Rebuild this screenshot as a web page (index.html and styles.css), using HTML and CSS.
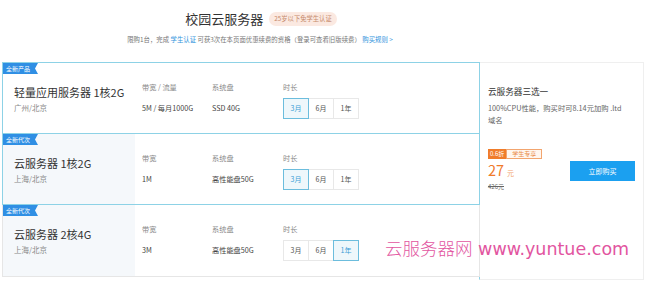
FILE: index.html
```html
<!DOCTYPE html>
<html lang="zh-CN">
<head>
<meta charset="utf-8">
<title>校园云服务器</title>
<link rel="stylesheet" href="styles.css">
</head>
<body>
<div class="page">
  <header class="head">
    <div class="head-row">
      <h1 class="title">校园云服务器</h1>
      <span class="pill">25岁以下免学生认证</span>
    </div>
    <p class="sub">限购1台，完成 <a class="link">学生认证</a> 可获3次在本页面优惠续费的资格（登录可查看旧版续费） <a class="link">购买规则 &gt;</a></p>
  </header>

  <main class="main">
    <section class="list">
      <div class="card card-active">
        <span class="ribbon">全新产品</span>
        <div class="name-cell">
          <div class="name">轻量应用服务器 1核2G</div>
          <div class="loc">广州/北京</div>
        </div>
        <div class="specs">
          <div class="col col-bw">
            <div class="lab">带宽 / 流量</div>
            <div class="val">5M / 每月1000G</div>
          </div>
          <div class="col col-disk">
            <div class="lab">系统盘</div>
            <div class="val">SSD 40G</div>
          </div>
          <div class="col col-dur">
            <div class="lab">时长</div>
            <div class="opts">
              <span class="opt opt-on">3月</span><span class="opt">6月</span><span class="opt">1年</span>
            </div>
          </div>
        </div>
      </div>

      <div class="card card-active card-tint">
        <span class="ribbon">全新代次</span>
        <div class="name-cell">
          <div class="name">云服务器 1核2G</div>
          <div class="loc">上海/北京</div>
        </div>
        <div class="specs">
          <div class="col col-bw">
            <div class="lab">带宽</div>
            <div class="val">1M</div>
          </div>
          <div class="col col-disk">
            <div class="lab">系统盘</div>
            <div class="val">高性能盘50G</div>
          </div>
          <div class="col col-dur">
            <div class="lab">时长</div>
            <div class="opts">
              <span class="opt opt-on">3月</span><span class="opt">6月</span><span class="opt">1年</span>
            </div>
          </div>
        </div>
      </div>

      <div class="card card-tint">
        <span class="ribbon">全新代次</span>
        <div class="name-cell">
          <div class="name">云服务器 2核4G</div>
          <div class="loc">上海/北京</div>
        </div>
        <div class="specs">
          <div class="col col-bw">
            <div class="lab">带宽</div>
            <div class="val">3M</div>
          </div>
          <div class="col col-disk">
            <div class="lab">系统盘</div>
            <div class="val">高性能盘50G</div>
          </div>
          <div class="col col-dur">
            <div class="lab">时长</div>
            <div class="opts">
              <span class="opt">3月</span><span class="opt">6月</span><span class="opt opt-on">1年</span>
            </div>
          </div>
        </div>
      </div>
    </section>

    <aside class="panel">
      <div class="p-title">云服务器三选一</div>
      <p class="p-desc">100%CPU性能，购买时可8.14元加购 .ltd 域名</p>
      <div class="buy">
        <div class="price-box">
          <div class="tags"><span class="tag-off">0.6折</span><span class="tag-stu">学生专享</span></div>
          <div class="price"><span class="num">27</span><span class="unit">元</span></div>
          <div class="old">426元</div>
        </div>
        <a class="btn">立即购买</a>
      </div>
    </aside>
  </main>

  <div class="watermark"><span class="wm-cn">云服务器网</span> www.yuntue.com</div>
</div>
</body>
</html>
```
FILE: styles.css
```css
* { box-sizing: border-box; }
html, body { margin: 0; padding: 0; background: #fff; }
body {
  font-family: "Noto Sans CJK SC", "Noto Sans", sans-serif;
  color: #333;
  width: 650px;
  height: 283px;
  overflow: hidden;
}
.page { position: relative; width: 650px; height: 283px; }

.head { width: 520px; padding-top: 9px; text-align: center; }
.head-row { display: flex; justify-content: center; align-items: center; gap: 6px; height: 20px; padding-left: 2px; }
.title { margin: 0; font-size: 13px; font-weight: 400; line-height: 20px; color: #333; }
.pill {
  display: inline-block;
  height: 14px;
  line-height: 14px;
  padding: 0 5px;
  border-radius: 7px;
  background: #fbe9e1;
  color: #c68a6c;
  font-size: 6.3px;
}
.sub { margin: 6px 0 0; font-size: 6.4px; line-height: 10px; color: #777; }
.link { color: #2f93dd; text-decoration: none; }

.main { display: flex; margin-top: 17px; padding-left: 2px; }
.list { width: 478px; display: flex; flex-direction: column; }

.card {
  position: relative;
  display: flex;
  height: 72px;
  border: 1px solid #e6e6e6;
  background: #fff;
}
.card + .card { margin-top: -1px; }
.card-active { border-color: #8dd2e6; z-index: 1; }
.card:last-child { height: 73px; }

.ribbon {
  position: absolute;
  left: 0;
  top: 0;
  height: 11px;
  width: 35px;
  padding-left: 3px;
  line-height: 11px;
  font-size: 6px;
  color: #fff;
  background: #2f8fe4;
  clip-path: polygon(0 0, 100% 0, calc(100% - 3px) 50%, 100% 100%, 0 100%);
  z-index: 2;
}

.name-cell { width: 132px; padding: 22px 0 0 11px; }
.card-tint .name-cell { background: #f5f8fb; }
.name { font-size: 11px; line-height: 14px; color: #333; white-space: nowrap; }
.loc { margin-top: 4px; font-size: 7.5px; line-height: 10px; color: #888; }

.specs { display: flex; padding: 19px 0 0 7px; }
.col { display: flex; flex-direction: column; }
.col-bw { width: 70px; }
.col-disk { width: 71px; }
.lab { font-size: 7.2px; line-height: 10px; color: #888; white-space: nowrap; }
.val { margin-top: 6px; font-size: 7.2px; line-height: 21px; color: #444; white-space: nowrap; }
.opts { display: flex; margin-top: 6px; }
.opt {
  width: 26px;
  height: 21px;
  border: 1px solid #e8e8e8;
  font-size: 7px;
  line-height: 19px;
  text-align: center;
  color: #555;
}
.opt + .opt { margin-left: -1px; }
.opt-on { border-color: #6cbddd; background: #eef7fb; color: #3a9ed6; position: relative; z-index: 1; }

.panel {
  width: 165px;
  height: 218px;
  margin-left: -1px;
  border: 1px solid #efefef;
  border-left-color: #8dd2e6;
  padding: 22px 8px 0 8px;
}
.p-title { font-size: 8.6px; line-height: 12px; color: #333; }
.p-desc { margin: 5px 0 0; width: 138px; font-size: 7.3px; line-height: 12px; color: #666; }
.buy { display: flex; align-items: center; justify-content: space-between; margin-top: 23px; }
.price-box { display: flex; flex-direction: column; }
.tags { display: flex; height: 10px; }
.tag-off {
  background: #f07c2a;
  color: #fff;
  font-size: 6px;
  line-height: 10px;
  padding: 0 2px;
}
.tag-stu {
  border: 1px solid #f2a56f;
  background: #fff6ef;
  color: #e98a46;
  font-size: 6px;
  line-height: 8px;
  padding: 0 5px;
}
.price { margin-top: 3px; color: #f07a2a; line-height: 16px; display: flex; align-items: baseline; gap: 3px; }
.num { font-size: 14.5px; }
.unit { font-size: 7px; color: #f3a46e; }
.old { margin-top: 2px; font-size: 6px; line-height: 8px; color: #666; text-decoration: line-through; }
.btn {
  display: block;
  width: 65px;
  height: 20px;
  line-height: 20px;
  margin-top: 1px;
  background: #1ba0f0;
  color: #fff;
  font-size: 7px;
  text-align: center;
}

.watermark {
  position: absolute;
  left: 385px;
  top: 236px;
  font-size: 17.5px;
  line-height: 24px;
  color: #e2559f;
  white-space: nowrap;
  font-family: "DejaVu Sans", "Noto Sans", sans-serif;
  letter-spacing: 0;
}
.wm-cn { font-family: "Noto Sans CJK SC", sans-serif; font-weight: 300; }
```
